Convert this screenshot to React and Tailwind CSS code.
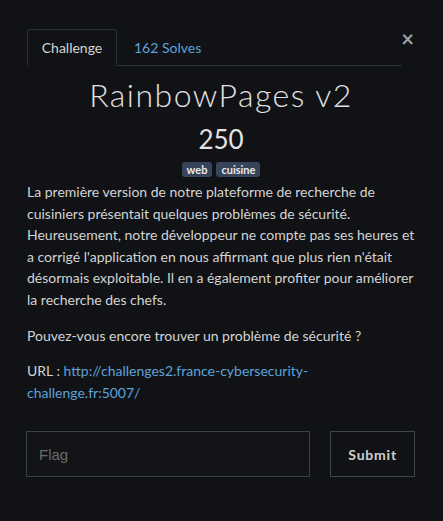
export default function App() {
  return (
    <div className="w-[443px] h-[521px] bg-[#101215] text-[#d9d9d9] overflow-hidden" style={{ fontFamily: "Lato, 'Liberation Sans', sans-serif" }}>
      <div className="pt-[29px] pl-[27px] pr-[28px] relative">
        <button className="absolute right-[29px] top-[28px] text-[#9aa0a6] text-[22px] leading-none font-bold">×</button>
        <div className="flex border-b border-[#2c3138] w-[375px] h-[37px]">
          <div className="h-[37px] -mb-px w-[90px] border border-[#2c3138] border-b-[#101215] rounded-t-[3px] flex items-center justify-center text-[14px] text-[#d6d6d6] bg-[#101215]">Challenge</div>
          <div className="h-[36px] flex items-center pl-[17px] text-[14px] text-[#5ea3d9]">162 Solves</div>
        </div>
        <div className="text-center mt-[9px] text-[32px] leading-[40px] font-light tracking-[1.5px] text-[#e2e2e2]">RainbowPages v2</div>
        <div className="text-center mt-[6px] text-[26px] leading-[36px] text-[#e2e2e2]">250</div>
        <div className="flex justify-center gap-[4px] mt-[5px]">
          <span className="bg-[#37445a] text-[#eaeaea] text-[11px] font-bold leading-[15px] px-[5px] rounded-[3px]">web</span>
          <span className="bg-[#37445a] text-[#eaeaea] text-[11px] font-bold leading-[15px] px-[5px] rounded-[3px]">cuisine</span>
        </div>
        <div className="text-[14px] leading-[21.6px] text-[#d4d4d4] mt-[4px]">
          <p>La première version de notre plateforme de recherche de cuisiniers présentait quelques problèmes de sécurité. Heureusement, notre développeur ne compte pas ses heures et a corrigé l'application en nous affirmant que plus rien n'était désormais exploitable. Il en a également profiter pour améliorer la recherche des chefs.</p>
          <p className="mt-[14px]">Pouvez-vous encore trouver un problème de sécurité ?</p>
          <p className="mt-[14px]">URL : <a className="text-[#5ea3d9]">http://challenges2.france-cybersecurity-challenge.fr:5007/</a></p>
        </div>
        <div className="flex mt-[28px] gap-[20px]">
          <input placeholder="Flag" className="w-[285px] h-[46px] -ml-px border border-[#39414b] bg-[#121417] px-[12px] text-[15px] placeholder-[#6a6a6a] outline-none" style={{ fontFamily: "'Liberation Sans', Arial, sans-serif" }} />
          <button className="w-[85px] h-[46px] border border-[#3f454c] text-[14px] font-bold tracking-[0.8px] text-[#cfcfcf]">Submit</button>
        </div>
      </div>
    </div>
  );
}
